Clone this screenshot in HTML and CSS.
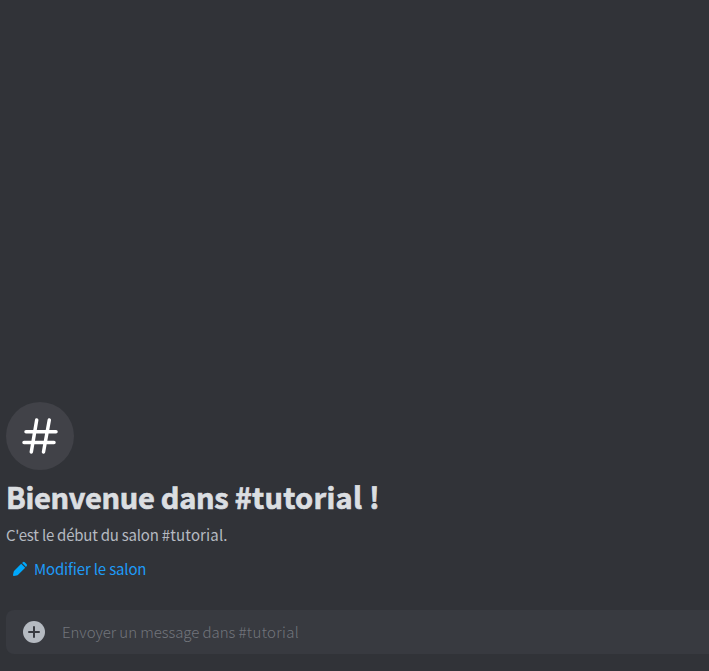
FILE: index.html
```html
<!DOCTYPE html>
<html lang="fr">
<head>
<meta charset="utf-8">
<title>#tutorial</title>
<link rel="stylesheet" href="styles.css">
</head>
<body>
<main class="chat">
  <section class="welcome">
    <div class="channel-icon">
      <svg width="68" height="68" viewBox="0 0 68 68" fill="none" stroke="#fff" stroke-width="3.5" stroke-linecap="round"><path d="M30.7 18 25.3 50M43.3 18 37.5 50M20 29.7H50M18 40.4H48"/></svg>
    </div>
    <h1 class="title">Bienvenue dans <span class="channel">#tutorial !</span></h1>
    <p class="description">C'est le début du salon <span class="channel">#tutorial.</span></p>
    <a class="edit">
      <svg class="pencil" width="16" height="16" viewBox="0 0 16 16" fill="#00a8fc"><path d="M9.2 2.8 13.2 6.8 6.4 13.5Q5.6 14.3 4.5 14.5L1.9 15Q.9 15 1 14L1.5 11.4Q1.7 10.3 2.5 9.5ZM10.1 1.9 10.9 1.2Q11.8.5 12.7 1.2L14.7 3.2Q15.4 4.1 14.7 5L14 5.9Z"/></svg>
      <span class="edit-label">Modifier le salon</span>
    </a>
  </section>
  <form class="composer">
    <svg class="plus" width="22" height="22" viewBox="0 0 22 22"><circle cx="11" cy="11" r="11" fill="#b5bac1"/><path d="M11 6V16M6 11H16" stroke="#383a40" stroke-width="2" stroke-linecap="round"/></svg>
    <span class="placeholder">Envoyer un message dans <span class="channel">#tutorial</span></span>
  </form>
</main>
</body>
</html>
```
FILE: styles.css
```css
* { box-sizing: border-box; }
body {
  margin: 0;
  background: #313338;
  font-family: "Noto Sans CJK SC", "Noto Sans", sans-serif;
  font-size: 15px;
  font-variant-ligatures: none;
  overflow: hidden;
}
.chat {
  height: 671px;
  display: flex;
  flex-direction: column;
  justify-content: flex-end;
  padding: 0 0 17px 6px;
}
.welcome {
  display: flex;
  flex-direction: column;
  align-items: flex-start;
  margin-bottom: 25px;
}
.channel-icon {
  width: 68px;
  height: 68px;
  border-radius: 50%;
  background: #414248;
}
.channel-icon svg { display: block; }
.title {
  margin: 6px 0 9px;
  font-size: 29px;
  line-height: 40px;
  font-weight: 700;
  letter-spacing: -0.3px;
  color: #dbdee1;
  -webkit-text-stroke: 0.7px #dbdee1;
  white-space: nowrap;
}
.title .channel { letter-spacing: 0.25px; }
.description {
  margin: 0;
  line-height: 20px;
  letter-spacing: -0.23px;
  color: #b5bac1;
  white-space: nowrap;
}
.description .channel { letter-spacing: 0.15px; }
.edit {
  display: flex;
  align-items: center;
  gap: 6px;
  height: 32px;
  margin-top: 8px;
  padding: 2px 6px;
  color: #1e9bf7;
}
.edit-label {
  line-height: 20px;
  letter-spacing: -0.16px;
  white-space: nowrap;
}
.composer {
  display: flex;
  align-items: center;
  height: 44px;
  padding-left: 17px;
  gap: 17px;
  border-radius: 8px 0 0 8px;
  background: #383a40;
}
.placeholder {
  margin-top: -1px;
  line-height: 21px;
  letter-spacing: -0.06px;
  font-weight: 300;
  color: #72757c;
  white-space: nowrap;
}
.placeholder .channel { letter-spacing: 0.35px; }
```
